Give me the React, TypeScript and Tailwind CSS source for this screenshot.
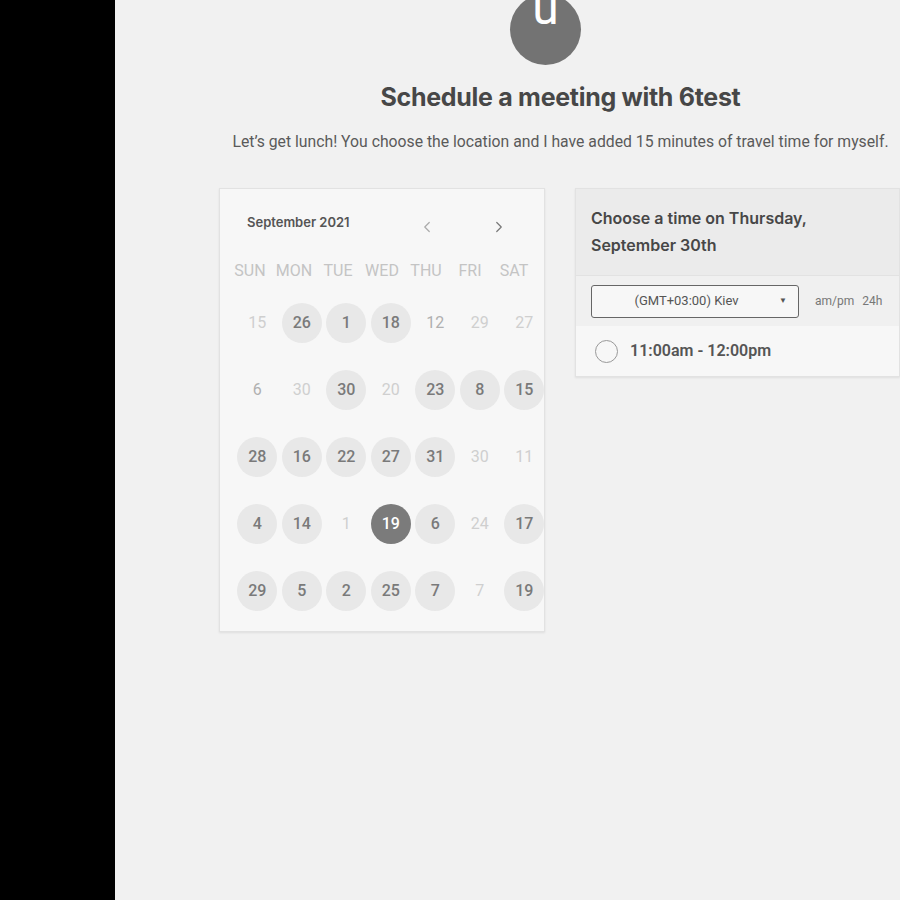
import { ChevronLeft, ChevronRight } from "lucide-react";

type Day = { n: number; kind: "on" | "off" | "dim" | "sel" };

const rows: Day[][] = [
  [
    { n: 15, kind: "off" },
    { n: 26, kind: "on" },
    { n: 1, kind: "on" },
    { n: 18, kind: "on" },
    { n: 12, kind: "dim" },
    { n: 29, kind: "off" },
    { n: 27, kind: "off" },
  ],
  [
    { n: 6, kind: "dim" },
    { n: 30, kind: "off" },
    { n: 30, kind: "on" },
    { n: 20, kind: "off" },
    { n: 23, kind: "on" },
    { n: 8, kind: "on" },
    { n: 15, kind: "on" },
  ],
  [
    { n: 28, kind: "on" },
    { n: 16, kind: "on" },
    { n: 22, kind: "on" },
    { n: 27, kind: "on" },
    { n: 31, kind: "on" },
    { n: 30, kind: "off" },
    { n: 11, kind: "off" },
  ],
  [
    { n: 4, kind: "on" },
    { n: 14, kind: "on" },
    { n: 1, kind: "off" },
    { n: 19, kind: "sel" },
    { n: 6, kind: "on" },
    { n: 24, kind: "off" },
    { n: 17, kind: "on" },
  ],
  [
    { n: 29, kind: "on" },
    { n: 5, kind: "on" },
    { n: 2, kind: "on" },
    { n: 25, kind: "on" },
    { n: 7, kind: "on" },
    { n: 7, kind: "off" },
    { n: 19, kind: "on" },
  ],
];

const weekDays = ["SUN", "MON", "TUE", "WED", "THU", "FRI", "SAT"];

const DayCell = ({ day }: { day: Day }) => {
  if (day.kind === "sel") {
    return (
      <div className="w-10 h-10 rounded-full bg-[#7b7b7b] text-white font-medium flex items-center justify-center">
        {day.n}
      </div>
    );
  }
  if (day.kind === "on") {
    return (
      <div className="w-10 h-10 rounded-full bg-[#e8e8e8] text-[#7a7a7a] font-medium flex items-center justify-center">
        {day.n}
      </div>
    );
  }
  return (
    <div
      className={
        "w-10 h-10 flex items-center justify-center " +
        (day.kind === "dim" ? "text-[#b0b0b0]" : "text-[#cfcfcf]")
      }
    >
      {day.n}
    </div>
  );
};

const Calendar = () => {
  return (
    <div className="w-[326px] h-[444px] bg-[#f7f7f7] border border-[#e2e2e2] shadow-[0_1px_2px_rgba(0,0,0,0.08)] overflow-hidden">
      <div className="flex items-center h-[70px] pl-[27px] pt-[2px]">
        <div className="text-[13px] font-semibold text-[#555] font-['Inter'] w-[167px] -mt-[4px]">
          September 2021
        </div>
        <ChevronLeft className="w-[18px] h-[18px] text-[#aaa] ml-[4px] mt-[4px]" strokeWidth={1.6} />
        <ChevronRight className="w-[18px] h-[18px] text-[#777] ml-[54px] mt-[4px]" strokeWidth={1.6} />
      </div>
      <div className="grid grid-cols-[repeat(7,44px)] pl-[8px] text-[16px] text-[#c4c4c4] h-[24px] items-center">
        {weekDays.map((d) => (
          <div key={d} className="text-center">
            {d}
          </div>
        ))}
      </div>
      <div className="flex flex-col pl-[15px] pt-[20px] gap-[27px]">
        {rows.map((row, i) => (
          <div key={i} className="grid grid-cols-[repeat(7,44.5px)] text-[16px]">
            {row.map((day, j) => (
              <div key={j} className="flex justify-center">
                <DayCell day={day} />
              </div>
            ))}
          </div>
        ))}
      </div>
    </div>
  );
};

const TimePanel = () => {
  return (
    <div className="w-[325px] bg-[#f7f7f7] border border-[#e2e2e2] shadow-[0_1px_2px_rgba(0,0,0,0.08)]">
      <div className="bg-[#ebebeb] h-[87px] px-[15px] pt-[16px] text-[16px] leading-[27px] font-semibold text-[#474747] font-['Inter'] border-b border-[#e2e2e2]">
        Choose a time on Thursday,
        <br />
        September 30th
      </div>
      <div className="bg-[#f0f0f0] h-[50px] flex items-center pl-[15px]">
        <div className="w-[208px] h-[33px] border border-[#666] rounded-[3px] bg-[#f7f7f7] flex items-center text-[13px] text-[#555]">
          <span className="flex-1 text-center pl-[2px]">(GMT+03:00) Kiev</span>
          <span className="text-[8px] text-[#555] mr-[11px]">▼</span>
        </div>
        <div className="ml-[16px] text-[12px] text-[#777] flex gap-[8px]">
          <span>am/pm</span>
          <span>24h</span>
        </div>
      </div>
      <div className="h-[50px] flex items-center pl-[19px]">
        <div className="w-[23px] h-[23px] rounded-full border-[1.5px] border-[#999]" />
        <div className="ml-[12px] text-[16px] font-semibold text-[#555]">11:00am - 12:00pm</div>
      </div>
    </div>
  );
};

const App = () => {
  return (
    <div className="flex w-[900px] h-[900px] overflow-hidden font-['Roboto',sans-serif]">
      <div className="w-[115px] bg-black shrink-0" />
      <div className="flex-1 bg-[#f1f1f1] flex flex-col items-center pl-[106px]">
        <div className="-mt-[6px] ml-[-30px] w-[71px] h-[71px] rounded-full bg-[#737373] text-white text-[48px] leading-none flex items-end justify-center overflow-hidden">
          <span className="mb-[33px]">u</span>
        </div>
        <div className="mt-[14px] text-[25px] font-bold text-[#474747] font-['Inter'] tracking-[-0.3px]">
          Schedule a meeting with 6test
        </div>
        <div className="mt-[13px] text-[15.75px] text-[#5a5a5a] whitespace-nowrap">
          Let’s get lunch! You choose the location and I have added 15 minutes of travel time for myself.
        </div>
        <div className="flex items-start gap-[30px] mt-[35px] self-start ml-[-2px]">
          <Calendar />
          <TimePanel />
        </div>
      </div>
    </div>
  );
};

export default App;
